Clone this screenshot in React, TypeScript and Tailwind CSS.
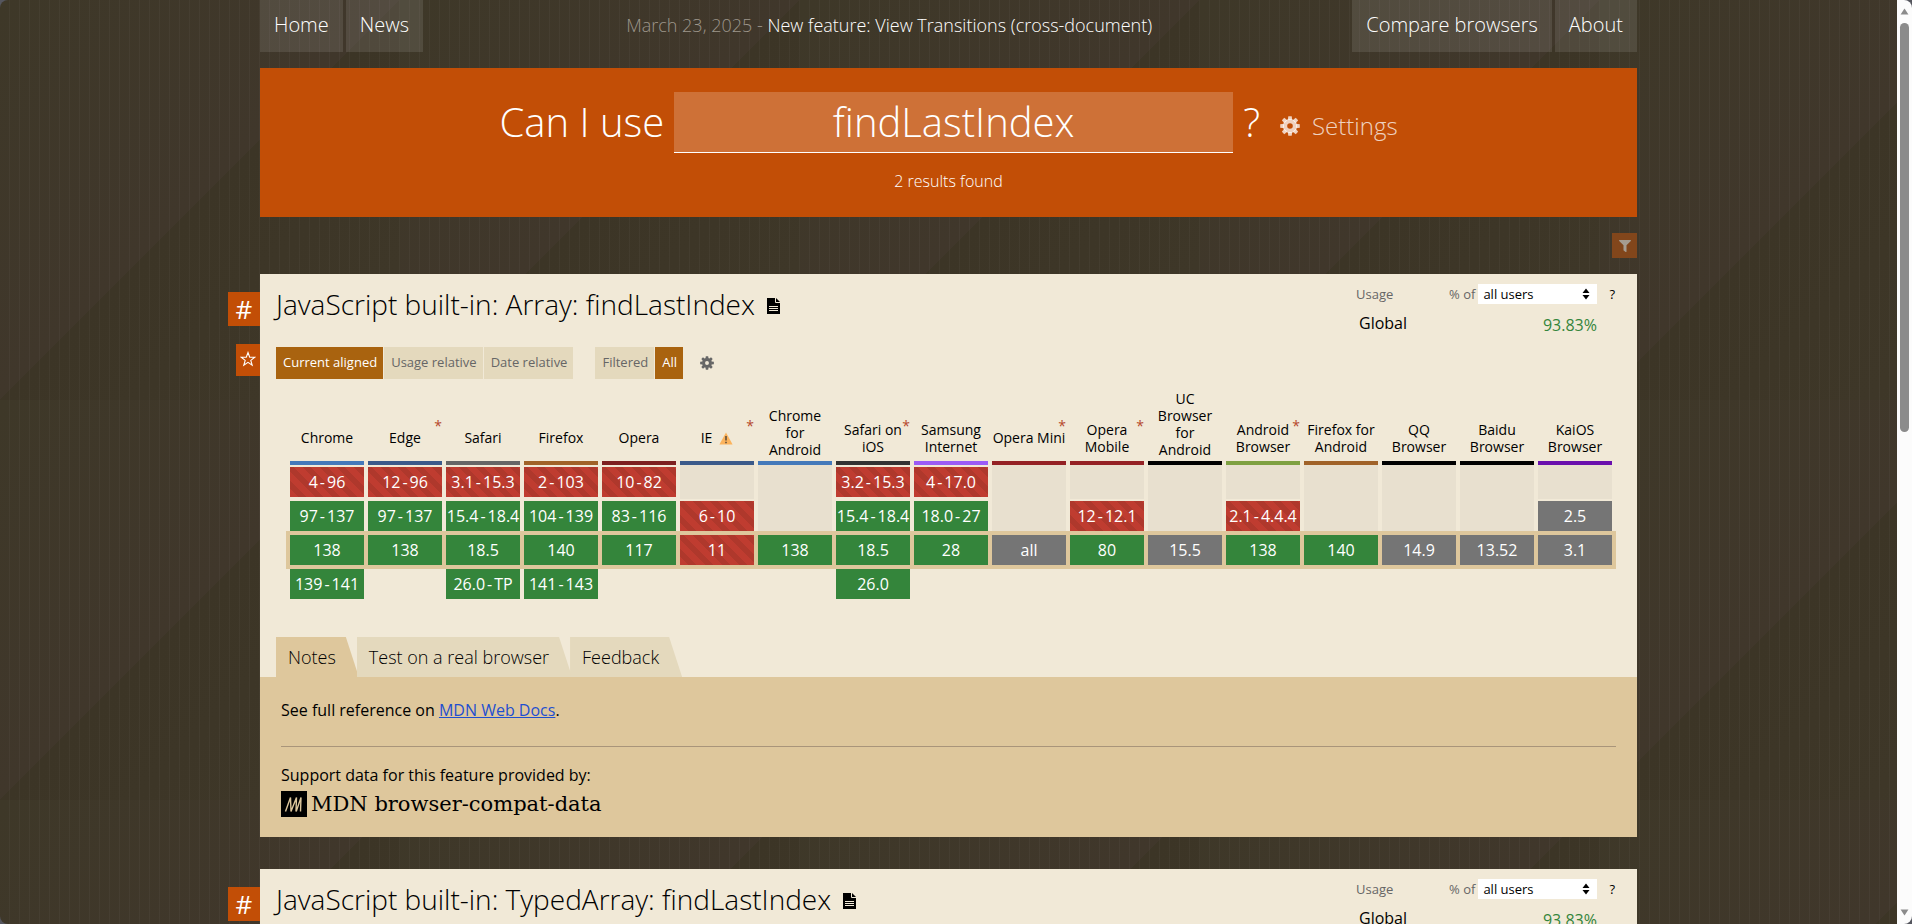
import React from 'react';
import clsx from 'clsx';
import { FaFilter } from 'react-icons/fa';

type Support = 'y' | 'n' | 'u';
type Cell = [string, Support] | null;

type Browser = {
  name: string;
  bar: string;
  starred?: boolean;
  warning?: boolean;
  cells: [Cell, Cell, Cell, Cell];
};

// A line break in a name is kept in the column heading
const browsers: Browser[] = [
  { name: 'Chrome', bar: 'bg-[#4479ba]', cells: [['4-96', 'n'], ['97-137', 'y'], ['138', 'y'], ['139-141', 'y']] },
  { name: 'Edge', bar: 'bg-[#3b5a8a]', starred: true, cells: [['12-96', 'n'], ['97-137', 'y'], ['138', 'y'], null] },
  { name: 'Safari', bar: 'bg-[#666666]', cells: [['3.1-15.3', 'n'], ['15.4-18.4', 'y'], ['18.5', 'y'], ['26.0-TP', 'y']] },
  { name: 'Firefox', bar: 'bg-[#a06228]', cells: [['2-103', 'n'], ['104-139', 'y'], ['140', 'y'], ['141-143', 'y']] },
  { name: 'Opera', bar: 'bg-[#7d2020]', cells: [['10-82', 'n'], ['83-116', 'y'], ['117', 'y'], null] },
  { name: 'IE', bar: 'bg-[#3b5a8a]', starred: true, warning: true, cells: [null, ['6-10', 'n'], ['11', 'n'], null] },
  { name: 'Chrome\nfor\nAndroid', bar: 'bg-[#4479ba]', cells: [null, null, ['138', 'y'], null] },
  { name: 'Safari on\niOS', bar: 'bg-[#333333]', starred: true, cells: [['3.2-15.3', 'n'], ['15.4-18.4', 'y'], ['18.5', 'y'], ['26.0', 'y']] },
  { name: 'Samsung\nInternet', bar: 'bg-[#9b5cf6]', cells: [['4-17.0', 'n'], ['18.0-27', 'y'], ['28', 'y'], null] },
  { name: 'Opera Mini', bar: 'bg-[#942124]', starred: true, cells: [null, null, ['all', 'u'], null] },
  { name: 'Opera\nMobile', bar: 'bg-[#942124]', starred: true, cells: [null, ['12-12.1', 'n'], ['80', 'y'], null] },
  { name: 'UC\nBrowser\nfor\nAndroid', bar: 'bg-black', cells: [null, null, ['15.5', 'u'], null] },
  { name: 'Android\nBrowser', bar: 'bg-[#7ea041]', starred: true, cells: [null, ['2.1-4.4.4', 'n'], ['138', 'y'], null] },
  { name: 'Firefox for\nAndroid', bar: 'bg-[#a06228]', cells: [null, null, ['140', 'y'], null] },
  { name: 'QQ\nBrowser', bar: 'bg-black', cells: [null, null, ['14.9', 'u'], null] },
  { name: 'Baidu\nBrowser', bar: 'bg-black', cells: [null, null, ['13.52', 'u'], null] },
  { name: 'KaiOS\nBrowser', bar: 'bg-[#6a0fad]', cells: [null, ['2.5', 'u'], ['3.1', 'u'], null] },
];

const supportStyles: Record<Support, string> = {
  y: 'bg-[#34853b]',
  n: 'bg-[#bf3c30] bg-[repeating-linear-gradient(45deg,#bf3c30_0_6px,#af382c_6px_12px)]',
  u: 'bg-[#757575]',
};

function GearIcon({ className }: { className: string }) {
  const teeth = [0, 45, 90, 135, 180, 225, 270, 315];
  return (
    <svg viewBox="0 0 20 20" className={className} fill="currentColor" aria-hidden="true">
      <path fillRule="evenodd" d="M10 3a7 7 0 1 0 0 14a7 7 0 0 0 0-14zm0 4.2a2.8 2.8 0 1 1 0 5.6a2.8 2.8 0 0 1 0-5.6z" />
      {teeth.map((angle) => (
        <path key={angle} d="M7.8 4L8.3 0.2h3.4L12.2 4z" transform={`rotate(${angle} 10 10)`} />
      ))}
    </svg>
  );
}

function DocIcon() {
  return (
    <svg viewBox="0 0 13 16" className="mt-1 h-4 w-[13px]" aria-hidden="true">
      <path d="M0 0h9l4 4v12H0z" fill="#000" />
      <path d="M8.5 0v4.5H13" fill="none" stroke="#f1e9d7" />
      <path d="M2 8.5h9M2 10.5h9M2 12.5h9" stroke="#f1e9d7" />
    </svg>
  );
}

function WarningIcon() {
  return (
    <svg viewBox="0 0 14 13" className="mt-[2px] ml-[7px] h-[13px] w-[14px]" aria-hidden="true">
      <path d="M7 0.5L13.6 12.6H0.4z" fill="#fcb35c" />
      <path d="M7 4v4.5M7 9.8v1.5" stroke="#4a4037" strokeWidth="1.4" />
    </svg>
  );
}

function MdnIcon() {
  return (
    <svg viewBox="0 0 26 26" className="h-[26px] w-[26px]" aria-hidden="true">
      <path d="M0 0h26v26H0z" fill="#000" />
      <path d="M4.5 20.5L9.5 6.5L10 20.5L15.5 6.5L15 20.5M15.2 20.5L20 6.5L19.5 20.5" fill="none" stroke="#dec79c" strokeWidth="1.4" />
    </svg>
  );
}

function NavLink({ children }: { children: React.ReactNode }) {
  return (
    <a href="#" className="flex h-[52px] items-center bg-white/10 px-[14px] pb-[2px] text-xl font-light text-white">
      {children}
    </a>
  );
}

function Toggle({ active, children }: { active?: boolean; children: React.ReactNode }) {
  return (
    <button
      type="button"
      className={clsx('h-8 pr-[6px] pl-[7px] text-[13px]', active ? 'bg-[#a9630f] text-white' : 'bg-[#e4d9bd] text-[#666]')}
    >
      {children}
    </button>
  );
}

function Version({ range }: { range: string }) {
  const [from, to] = range.split('-');
  return (
    <>
      {from}
      {to && <span className="mx-[2px]">-</span>}
      {to}
    </>
  );
}

function SupportTable() {
  return (
    <table className="w-full table-fixed border-collapse text-center">
      <thead>
        <tr>
          {browsers.map((b) => (
            <th key={b.name} scope="col" className="relative p-0 align-bottom font-normal">
              <div className="flex min-h-[41px] items-center justify-center text-sm leading-[17px] whitespace-pre-line">
                {b.name}
                {b.warning && <WarningIcon />}
              </div>
              {b.starred && (
                <span className="absolute right-[2px] bottom-[31px] text-sm leading-[17px] text-[#b5482a]">*</span>
              )}
              <div className={clsx('mx-[2px] mt-[3px] h-1', b.bar)} />
            </th>
          ))}
        </tr>
      </thead>
      <tbody>
        {[0, 1, 2, 3].map((row) => (
          <tr key={row} className={clsx(row === 2 && 'bg-[#dec79c] outline-2 outline-[#dec79c]')}>
            {browsers.map((b) => {
              const cell = b.cells[row];
              return (
                <td key={b.name} className="h-[34px] px-[2px] py-0">
                  {cell ? (
                    <div className={clsx('flex h-[30px] items-center justify-center whitespace-nowrap text-white', supportStyles[cell[1]])}>
                      <Version range={cell[0]} />
                    </div>
                  ) : (
                    row < 2 && <div className="h-[34px] bg-[#e8e0cf]" />
                  )}
                </td>
              );
            })}
          </tr>
        ))}
      </tbody>
    </table>
  );
}

function Usage({ id }: { id: string }) {
  return (
    <div className="flex w-[259px] flex-col text-[13px] leading-5">
      <div className="flex items-center text-[#666]">
        <span className="flex-1">Usage</span>
        <label htmlFor={id} className="mr-[3px]">% of</label>
        <div className="relative">
          <select id={id} className="h-5 w-[119px] appearance-none bg-white px-[5px] text-[13px] leading-5 text-black">
            <option>all users</option>
          </select>
          <svg viewBox="0 0 8 12" className="pointer-events-none absolute top-1 right-[7px] h-3 w-2" aria-hidden="true">
            <path d="M0.5 5L4 0.5L7.5 5zM0.5 7L4 11.5L7.5 7z" fill="#000" />
          </svg>
        </div>
        <button type="button" className="ml-3 text-black">?</button>
      </div>
      <div className="mt-[9px] mr-[18px] ml-[3px] flex justify-between text-base leading-5">
        <span>Global</span>
        <span className="pt-[2px] text-[#34853b]">93.83%</span>
      </div>
    </div>
  );
}

function Tab({ active, children }: { active?: boolean; children: React.ReactNode }) {
  return (
    <button
      type="button"
      className={clsx(
        '-mr-[2px] h-10 pr-[23px] pl-3 text-lg font-light [clip-path:polygon(0_0,calc(100%-13px)_0,100%_100%,0_100%)]',
        active ? 'relative bg-[#dec79c]' : 'bg-[#e4d9bd]'
      )}
    >
      {children}
    </button>
  );
}

function Feature({ id, title }: { id: string; title: string }) {
  return (
    <article className="relative mb-8 bg-[#f1e9d7]">
      <div className="absolute top-[18px] right-full flex flex-col items-end gap-[18px]">
        <a href="#" className="flex h-[34px] w-8 items-center justify-center bg-[#c24e06] text-[26px] text-white">#</a>
        <button type="button" aria-label="Star" className="flex h-8 w-6 items-center justify-center bg-[#c24e06] pb-[2px] text-white">
          <svg viewBox="0 0 16 16" className="h-4 w-4" fill="none" stroke="currentColor" strokeWidth="1.1" aria-hidden="true">
            <path d="M8 1.5L9.7 6.2L14.8 6.3L10.8 9.4L12.2 14.3L8 11.4L3.8 14.3L5.2 9.4L1.2 6.3L6.3 6.2z" />
          </svg>
        </button>
      </div>
      <div className="flex items-start justify-between pt-[10px] pr-[22px] pl-4">
        <h2 className="flex items-center gap-3 text-[28px] leading-10 font-light">
          {title}
          <DocIcon />
        </h2>
        <Usage id={`usage-${id}`} />
      </div>
      <div className="mt-3 flex items-center gap-px pl-4">
        <Toggle active>Current aligned</Toggle>
        <Toggle>Usage relative</Toggle>
        <Toggle>Date relative</Toggle>
        <span className="w-5" />
        <Toggle>Filtered</Toggle>
        <Toggle active>All</Toggle>
        <button type="button" aria-label="Table settings" className="ml-4 text-[#666]">
          <GearIcon className="h-[14px] w-[14px]" />
        </button>
      </div>
      <div className="mt-[11px] pr-[23px] pl-7">
        <SupportTable />
      </div>
      <div className="mt-9 flex px-4">
        <Tab active>Notes</Tab>
        <Tab>Test on a real browser</Tab>
        <Tab>Feedback</Tab>
      </div>
      <div className="bg-[#dec79c] px-[21px] pt-[21px] pb-5 leading-6">
        <p>
          See full reference on <a href="#" className="text-[#1f4fd0] underline">MDN Web Docs</a>.
        </p>
        <hr className="mt-6 mb-4 border-[#a9957a]" />
        <p>Support data for this feature provided by:</p>
        <a href="#" className="mt-1 flex items-center gap-1 font-['DejaVu_Serif',serif] text-[21px] leading-6">
          <MdnIcon />
          MDN browser-compat-data
        </a>
      </div>
    </article>
  );
}

export default function App() {
  return (
    <div className="flex h-screen overflow-hidden bg-[#55565e] font-['Open_Sans',sans-serif] text-base text-black">
      <div className="flex-1 overflow-hidden rounded-tl-lg rounded-bl-lg bg-[#3d3628] bg-[repeating-linear-gradient(90deg,transparent_0_9px,rgba(255,255,255,0.03)_9px_10px),linear-gradient(135deg,#3e3828,#40372b_50%,#3c3526_50%,#3f3829)] bg-size-[400px_400px]">
        <div className="mx-auto w-full max-w-[1377px]">
          <header className="flex justify-between">
            <nav className="flex gap-[3px]">
              <NavLink>Home</NavLink>
              <NavLink>News</NavLink>
            </nav>
            <p className="pt-[13px] pl-[3px] text-lg leading-6 font-light text-[#9d968b]">
              March 23, 2025 - <a href="#" className="text-white">New feature: View Transitions (cross-document)</a>
            </p>
            <nav className="flex gap-[3px]">
              <NavLink>Compare browsers</NavLink>
              <NavLink>About</NavLink>
            </nav>
          </header>

          <section className="mt-4 bg-[#c24e06] pt-6 pb-6 text-center text-white">
            <div className="flex items-center justify-center font-light">
              <label htmlFor="search" className="mr-[10px] pb-[2px] text-[40px] leading-[58px]">Can I use</label>
              <input
                id="search"
                type="text"
                defaultValue="findLastIndex"
                className="h-[61px] w-[559px] border-b border-white bg-white/20 pb-[2px] text-center text-[40px] outline-none"
              />
              <span className="ml-[10px] pb-[2px] text-[40px] leading-[58px]">?</span>
              <button type="button" className="mt-[6px] ml-5 flex items-center gap-3 text-2xl text-white/75">
                <GearIcon className="h-5 w-5" />
                Settings
              </button>
            </div>
            <p className="mt-4 leading-6 font-light">2 results found</p>
          </section>

          <div className="flex justify-end py-4">
            <button type="button" aria-label="Filter" className="flex h-[25px] w-[25px] items-center justify-center bg-[#82461b] text-[#a59c90]">
              <FaFilter size={12} />
            </button>
          </div>

          <Feature id="array" title="JavaScript built-in: Array: findLastIndex" />
          <Feature id="typed-array" title="JavaScript built-in: TypedArray: findLastIndex" />
        </div>
      </div>

      <div className="flex w-[15px] flex-col items-center justify-between rounded-r-lg bg-[#fcfcfc] py-2" aria-hidden="true">
        <svg viewBox="0 0 10 8" className="h-[7px] w-[9px]" fill="#8b8b8b">
          <path d="M5 0.5L9.5 7.5H0.5z" />
        </svg>
        <div className="mt-2 mb-auto h-[45%] w-[9px] rounded-full bg-[#8b8b8b]" />
        <svg viewBox="0 0 10 8" className="h-[7px] w-[9px]" fill="#8b8b8b">
          <path d="M5 7.5L9.5 0.5H0.5z" />
        </svg>
      </div>
    </div>
  );
}
